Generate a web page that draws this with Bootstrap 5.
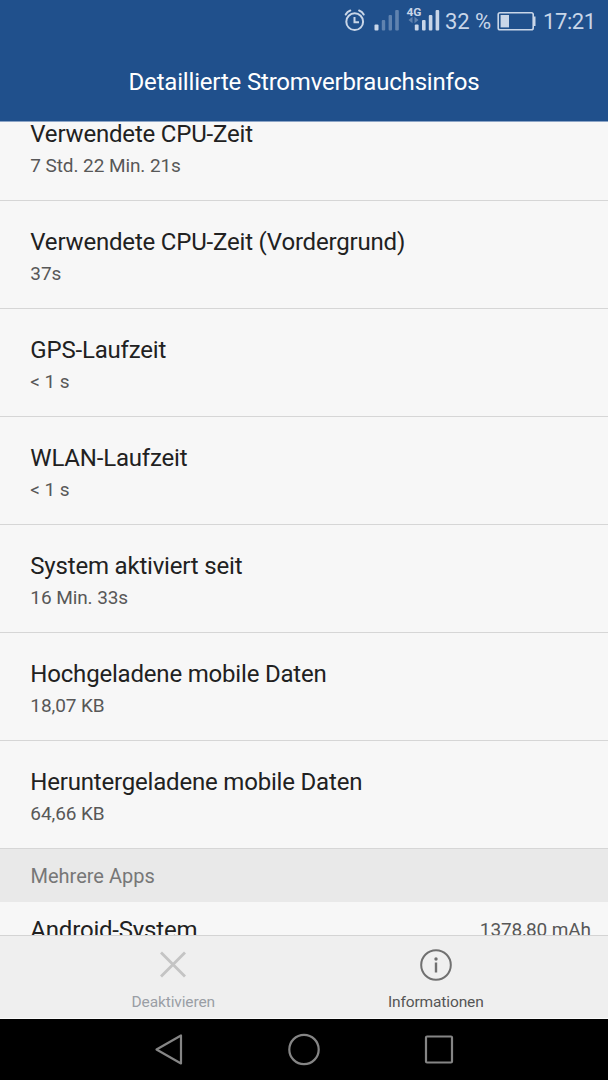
<!DOCTYPE html>
<html lang="de">
<head>
<meta charset="utf-8">
<meta name="viewport" content="width=device-width, initial-scale=1">
<title>Detaillierte Stromverbrauchsinfos</title>
<link href="https://cdn.jsdelivr.net/npm/bootstrap@5.3.0/dist/css/bootstrap.min.css" rel="stylesheet">
<style>
body{font-family:Roboto,"Liberation Sans",sans-serif;background:#000;height:1080px}
.top-area{background:#20508c;height:122px;border-bottom:1px solid #8ba4c6;color:#fff}
.status{height:42px;color:#c9d6e8;font-size:22px;line-height:43px;padding-right:12px}
.status svg{display:block}
.pct{width:47px;margin-left:5px;letter-spacing:-.1px}
.clock{width:53px;margin-left:6px;letter-spacing:-.4px}
.page-title{font-size:24px;line-height:80px;letter-spacing:-.18px}
.scroll-area{height:813px;background:#f7f7f7}
.stat-list{margin-top:-29px}
.stat{height:108px;padding:22px 30px 0 30.3px;border-bottom:1px solid #d6d6d6}
.stat-name{font-size:24px;line-height:28px;color:#212121;padding-top:5px;letter-spacing:-.19px}
.stat-value{font-size:19px;line-height:24px;color:#585858;margin-top:6px;letter-spacing:-.08px}
.section-head{height:53px;line-height:54px;background:#e9e9e9;color:#777;font-size:20px;padding-left:30.5px}
.app-row{padding:14px 17px 0 30.3px}
.mah{font-size:19px;line-height:28px;color:#585858;letter-spacing:-.08px}
.actions{height:84px;background:#efefef;border-top:1px solid #d4d4d4;border-bottom:1px solid #fafafa;padding:0 42px;font-size:15.5px;line-height:21px}
.action{flex:0 0 262.5px;padding-top:12px;letter-spacing:-.12px}
.action svg{margin-bottom:10px}
.off{color:#9a9ea5}
.on{color:#555}
.softkeys{height:61px}
</style>
</head>
<body class="overflow-hidden d-flex flex-column">
<header class="top-area flex-shrink-0">
  <div class="status d-flex justify-content-end">
    <svg width="96" height="42" viewBox="344 0 96 42" fill="none" stroke="#c9d6e8">
      <circle cx="354.7" cy="21.7" r="8.4" stroke-width="2"/>
      <path d="M354.5 17v5.300h4.500" stroke-width="2"/>
      <path d="M345.700 14.500q1.500-3 4.600-4M359.100 10.500q3.100 1 4.600 4" stroke-width="2" stroke-linecap="round"/>
      <g stroke="none" fill="#c9d6e8">
        <rect x="374.5" y="24.5" width="4" height="6" rx="1"/>
        <g opacity=".38"><rect x="381.800" y="20" width="3.400" height="10.500" rx="1"/><rect x="388.600" y="15" width="3.400" height="15.500" rx="1"/><rect x="395.200" y="10" width="3.600" height="20.500" rx="1"/></g>
        <rect x="414.800" y="24.500" width="3.800" height="6" rx="1"/><rect x="422" y="20" width="3.600" height="10.500" rx="1"/><rect x="428.800" y="15" width="3.600" height="15.500" rx="1"/><rect x="435.600" y="10" width="3.600" height="20.500" rx="1"/>
        <path d="M408.500 20l4-3.200v6.400zM418.500 20l-4-3.200v6.400z" opacity=".38"/>
        <text x="406.500" y="15.700" font-size="11.500" font-weight="700" textLength="15" lengthAdjust="spacingAndGlyphs">4G</text>
      </g>
    </svg>
    <span class="pct text-nowrap">32 %</span>
    <svg class="ms-1" width="41" height="42" viewBox="496 0 41 42">
      <rect x="498.200" y="12.700" width="35" height="17" rx="1.800" fill="none" stroke="#c9d6e8" stroke-width="1.600"/>
      <rect x="500.600" y="15" width="8.400" height="12.400" fill="#c9d6e8"/>
      <path d="M534 16.500h1.500v9.500h-1.500z" fill="#c9d6e8"/>
    </svg>
    <span class="clock text-nowrap">17:21</span>
  </div>
  <h1 class="page-title text-center fw-normal m-0">Detaillierte Stromverbrauchsinfos</h1>
</header>
<main class="scroll-area overflow-hidden flex-shrink-0">
  <div class="stat-list">
    <div class="stat"><div class="stat-name">Verwendete CPU-Zeit</div><div class="stat-value">7 Std. 22 Min. 21s</div></div>
    <div class="stat"><div class="stat-name">Verwendete CPU-Zeit (Vordergrund)</div><div class="stat-value">37s</div></div>
    <div class="stat"><div class="stat-name">GPS-Laufzeit</div><div class="stat-value">&lt; 1 s</div></div>
    <div class="stat"><div class="stat-name">WLAN-Laufzeit</div><div class="stat-value">&lt; 1 s</div></div>
    <div class="stat"><div class="stat-name">System aktiviert seit</div><div class="stat-value">16 Min. 33s</div></div>
    <div class="stat"><div class="stat-name">Hochgeladene mobile Daten</div><div class="stat-value">18,07 KB</div></div>
    <div class="stat"><div class="stat-name">Heruntergeladene mobile Daten</div><div class="stat-value">64,66 KB</div></div>
  </div>
  <div class="section-head">Mehrere Apps</div>
  <div class="app-row d-flex justify-content-between"><span class="stat-name p-0">Android-System</span><span class="mah">1378,80 mAh</span></div>
</main>
<footer class="flex-shrink-0">
  <div class="actions d-flex">
    <div class="action off d-flex flex-column align-items-center">
      <svg width="34" height="34" viewBox="0 0 34 34" stroke="#c4c4c4" stroke-width="2.8"><path d="M5 4.500l24 24M29 4.500L5 28.500"/></svg>
      <span>Deaktivieren</span>
    </div>
    <div class="action on d-flex flex-column align-items-center">
      <svg width="34" height="34" viewBox="0 0 34 34" fill="none" stroke="#707070" stroke-width="2"><circle cx="17" cy="17" r="14.8"/><path d="M17 14.5v10" stroke-width="2.4"/><circle cx="17" cy="11" r="1.7" fill="#707070" stroke="none"/></svg>
      <span>Informationen</span>
    </div>
  </div>
  <div class="softkeys d-flex justify-content-center">
    <svg width="300" height="61" viewBox="154 1019 300 61" fill="none" stroke="#858585" stroke-width="2.2" stroke-linejoin="round"><path d="M156.500 1049.500L181 1035.500V1063.500Z"/><circle cx="304" cy="1049.500" r="14.700"/><rect x="426" y="1036.500" width="26" height="26" rx="1"/></svg>
  </div>
</footer>
<script src="https://cdn.jsdelivr.net/npm/bootstrap@5.3.0/dist/js/bootstrap.bundle.min.js"></script>
</body>
</html>
